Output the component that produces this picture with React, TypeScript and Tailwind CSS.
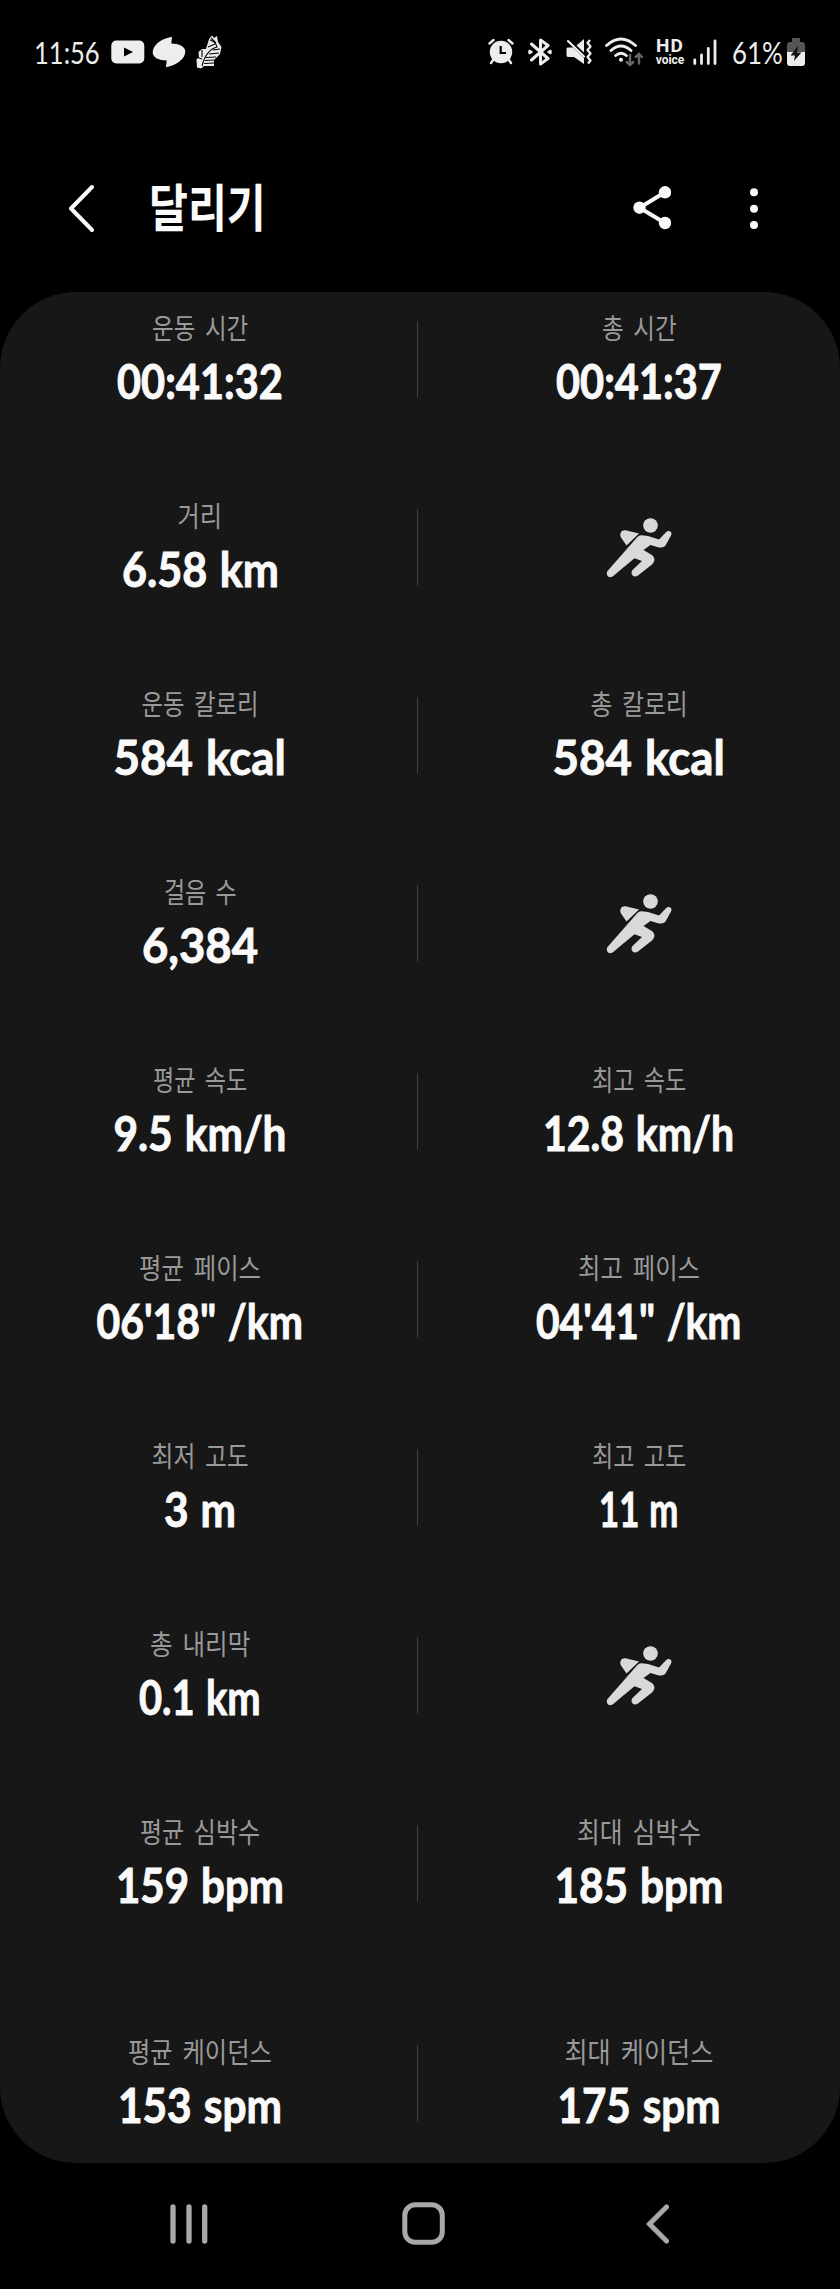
import { useLayoutEffect, useRef, useState } from "react";

type Cell = { label: string; labelWidth: number; value: string; valueWidth: number };
type Row = { left: Cell; right?: Cell };

const rows: Row[] = [
  {
    left: { label: "운동 시간", labelWidth: 94, value: "00:41:32", valueWidth: 162 },
    right: { label: "총 시간", labelWidth: 73, value: "00:41:37", valueWidth: 162 },
  },
  { left: { label: "거리", labelWidth: 43, value: "6.58 km", valueWidth: 153 } },
  {
    left: { label: "운동 칼로리", labelWidth: 115, value: "584 kcal", valueWidth: 168 },
    right: { label: "총 칼로리", labelWidth: 95, value: "584 kcal", valueWidth: 168 },
  },
  { left: { label: "걸음 수", labelWidth: 71, value: "6,384", valueWidth: 112 } },
  {
    left: { label: "평균 속도", labelWidth: 92, value: "9.5 km/h", valueWidth: 169 },
    right: { label: "최고 속도", labelWidth: 92, value: "12.8 km/h", valueWidth: 187 },
  },
  {
    left: { label: "평균 페이스", labelWidth: 120, value: "06'18\" /km", valueWidth: 202 },
    right: { label: "최고 페이스", labelWidth: 120, value: "04'41\" /km", valueWidth: 201 },
  },
  {
    left: { label: "최저 고도", labelWidth: 95, value: "3 m", valueWidth: 68 },
    right: { label: "최고 고도", labelWidth: 92, value: "11 m", valueWidth: 75 },
  },
  { left: { label: "총 내리막", labelWidth: 98, value: "0.1 km", valueWidth: 118 } },
  {
    left: { label: "평균 심박수", labelWidth: 118, value: "159 bpm", valueWidth: 164 },
    right: { label: "최대 심박수", labelWidth: 122, value: "185 bpm", valueWidth: 165 },
  },
  {
    left: { label: "평균 케이던스", labelWidth: 142, value: "153 spm", valueWidth: 160 },
    right: { label: "최대 케이던스", labelWidth: 147, value: "175 spm", valueWidth: 159 },
  },
];

// Condenses a single line of text to the given width.
function FitText({ text, width, className }: { text: string; width: number; className: string }) {
  const ref = useRef<HTMLSpanElement>(null);
  const [scale, setScale] = useState(1);

  useLayoutEffect(() => {
    if (ref.current) setScale(width / ref.current.offsetWidth);
  }, [text, width]);

  return (
    <span
      ref={ref}
      className={`inline-block whitespace-nowrap ${className}`}
      style={{ transform: `scaleX(${scale})` }}
    >
      {text}
    </span>
  );
}

function Runner() {
  return (
    <svg viewBox="0 0 66 60" className="mt-[9px] h-[60px] w-[66px]" fill="#d9d9d9">
      <circle cx="44.5" cy="7.5" r="7.3" />
      <path d="M33 15.5 L19.5 12.3 C15.5 11.8 13 15.5 15 19.5 L20.5 27.5 Z" />
      <path d="M36 17.3 C33.5 17 32 18.3 30.5 20 L1.5 53 C-1 57 3.5 61.5 7.5 57.8 L28.5 40.2 L36 43 L26.5 52 C23.5 56 28 60.5 32 57.5 L46 46.5 C49.5 43 49 39 45.5 36.7 L37.5 32 L44.5 27 L52 29.3 C55 30 57.5 29.5 59.5 27.5 L65 17.5 C67 14 62.5 11.5 60 14.3 L53 21.5 L42 18 Z" />
    </svg>
  );
}

function Metric({ cell }: { cell?: Cell }) {
  if (!cell) {
    return (
      <div className="flex w-[168px] justify-center">
        <Runner />
      </div>
    );
  }
  return (
    <div className="flex w-[220px] flex-col items-center">
      <FitText
        text={cell.label}
        width={cell.labelWidth + 2}
        className="-mt-[9px] h-[34px] font-['Noto_Sans_CJK_KR',sans-serif] text-[28px] leading-[30px] text-[#999999] [word-spacing:5px]"
      />
      <FitText
        text={cell.value}
        width={cell.valueWidth + 4}
        className="mt-[7px] h-14 font-['Lato',sans-serif] text-[47px] leading-[56px] font-bold text-[#fafafa] [-webkit-text-stroke:0.9px_#fafafa] [word-spacing:2px]"
      />
    </div>
  );
}

function StatusBar() {
  return (
    <header className="flex h-[104px] items-center pr-[35px] pl-[34px] text-[#ededed]">
      <div className="flex w-[66px] justify-center">
        <FitText text="11:56" width={66} className="font-['Lato',sans-serif] text-[31px] leading-8" />
      </div>
      <svg viewBox="0 0 34 24" className="ml-[11px] h-6 w-[34px]">
        <rect x="0.3" y="0.5" width="33" height="23" rx="5" fill="currentColor" />
        <path d="M13 7.5 L22 12 L13 16.5Z" fill="#000" />
      </svg>
      <svg viewBox="0 0 34 32" className="ml-[7px] h-8 w-[34px]" fill="currentColor">
        <path d="M20 0.8 L19.3 7.5 C27 7.5 33.3 10.5 33.3 15.5 C33.3 22.5 25 29.5 14 31.2 L14.7 24.5 C7 24.5 0.7 21.5 0.7 16.5 C0.7 9.5 9 2.5 20 0.8Z" />
      </svg>
      <svg viewBox="0 0 26 34" className="ml-2.5 h-[34px] w-[26px]">
        <path d="M13 4 L16 0.5 L18 3 L21 1 L22 7 L25.5 12 L24 19 L18 25 L18 31 L8 31 L5 33.5 L1 32.5 L0.5 24 L3 23 L2.5 17 L6 14 L10 14Z" fill="currentColor" />
        <path d="M14 5 Q20 7 21 12 Q10 15 6 31 M15 3 L20 8 M12 12 L19 9 M3 23 L6 24 M24 14 L17 15 M23 18 L13 19 M20 22 L10 22.5 M18 25 L9 25.5 M18 28 L8 28.5 M6 15 L6 22" stroke="#000" strokeWidth="1.1" fill="none" />
      </svg>

      <div className="ml-auto flex items-center">
        <svg viewBox="0 0 26 28" className="h-7 w-[26px]" fill="none" stroke="currentColor" strokeLinecap="round">
          <circle cx="13" cy="14" r="11.2" fill="currentColor" stroke="none" />
          <path d="M1.5 5.5 L5.5 2 M24.5 5.5 L20.5 2 M5 22 L3 25 M21 22 L23 25" strokeWidth="2.4" />
          <path d="M12.7 8 V15 H18" stroke="#000" strokeWidth="2.2" strokeLinecap="butt" />
        </svg>
        <svg viewBox="0 0 24 28" className="ml-3.5 h-7 w-6" fill="none" stroke="currentColor" strokeWidth="3" strokeLinecap="round" strokeLinejoin="round">
          <path d="M3.5 6 L20 20.5 L12.5 26 V2 L20 7.5 L3.5 22" />
          <path d="M1.3 12.7 V15.3 L3.7 14Z M22.7 12.7 V15.3 L20.3 14Z" strokeWidth="2" />
        </svg>
        <svg viewBox="0 0 26 28" className="ml-3.5 h-7 w-[26px]" fill="currentColor">
          <path d="M0.5 10.5 Q0.5 9.5 2 9.5 H7 L18 20 V26 L8 19 H2 Q0.5 19 0.5 17Z M10.5 7.5 L18 1 V14.5Z" />
          <path d="M2 3 L18 18.5" stroke="currentColor" strokeWidth="2.2" strokeLinecap="round" />
          <path d="M24 2 L21.5 5 L24.5 8.5 L21.5 12 L24.5 15.5 L21.5 19 L24.5 22.5 L22 25.5" fill="none" stroke="currentColor" strokeWidth="2.3" strokeLinejoin="round" />
        </svg>
        <svg viewBox="0 0 38 30" className="ml-[13px] h-[30px] w-[38px]" fill="none" stroke="currentColor" strokeWidth="2.9" strokeLinecap="round">
          <path d="M1.5 8.5 Q16 -4.5 30.5 8.5 M6 13.5 Q16 4.5 26 13.5 M10.7 18.5 Q16 14 21.3 18.5" />
          <circle cx="16" cy="22.8" r="2" fill="currentColor" stroke="none" />
          <path d="M25 18 V28 M21.8 25 L25 28 L28.2 25 M34 26.5 V17 M30.8 20 L34 17 L37 20" stroke="#666" strokeWidth="2.4" />
        </svg>
        <div className="ml-3 flex w-[30px] flex-col items-center font-['Roboto',sans-serif]">
          <span className="h-4 text-[19px] leading-4 font-bold tracking-[1px]">HD</span>
          <span className="h-3 text-[12px] leading-3 font-bold">voice</span>
        </div>
        <svg viewBox="0 0 24 28" className="ml-2 h-7 w-6" stroke="currentColor" strokeWidth="2.8" strokeLinecap="round">
          <path d="M1.8 22 V25.5 M8.5 17 V25.5 M15.3 10.5 V25.5 M22 3 V25.5" />
        </svg>
        <div className="ml-[15px] flex w-[50px] justify-center">
          <FitText text="61%" width={51} className="font-['Lato',sans-serif] text-[31px] leading-8" />
        </div>
        <svg viewBox="0 0 18 28" className="ml-[5px] h-7 w-[18px]">
          <path d="M5 0 H13 V4 H15 Q18 4 18 7 V14 H0 V7 Q0 4 3 4 H5Z" fill="#555" />
          <path d="M0 14 H18 V25 Q18 28 15 28 H3 Q0 28 0 25Z" fill="currentColor" />
          <path d="M11 8 L3.5 17.5 H8 L7 23 L14.5 14.5 H10Z" fill="#111" />
        </svg>
      </div>
    </header>
  );
}

function TitleBar() {
  return (
    <div className="flex h-[188px] items-start text-[#fafafa]">
      <svg viewBox="0 0 26 50" className="mt-20 ml-[68px] h-[50px] w-[26px]" fill="none" stroke="currentColor" strokeWidth="4" strokeLinecap="round" strokeLinejoin="round">
        <path d="M24 3 L3 24.5 L24 46" />
      </svg>
      <h1 className="mt-[71px] ml-[52px] flex w-[122px] justify-center">
        <FitText
          text="달리기"
          width={117}
          className="font-['Noto_Sans_CJK_KR',sans-serif] text-[51px] leading-[60px] font-bold"
        />
      </h1>
      <svg viewBox="0 0 38 44" className="mt-[82px] ml-[365px] h-11 w-[38px]" fill="currentColor">
        <path d="M32 6.3 L6.5 21.7 L32 37" fill="none" stroke="currentColor" strokeWidth="4" />
        <circle cx="32" cy="6.3" r="6.2" />
        <circle cx="6.5" cy="21.7" r="6.2" />
        <circle cx="32" cy="37" r="6.2" />
      </svg>
      <svg viewBox="0 0 8 42" className="mt-[84px] ml-[79px] h-[42px] w-2" fill="currentColor">
        <circle cx="4" cy="4.3" r="4" />
        <circle cx="4" cy="20.7" r="4" />
        <circle cx="4" cy="37" r="4" />
      </svg>
    </div>
  );
}

function NavBar() {
  return (
    <nav className="flex h-[122px] items-center pl-[170px] text-[#a8a8a8]">
      <svg viewBox="0 0 38 42" className="h-[42px] w-[38px]" stroke="currentColor" strokeWidth="5.3" strokeLinecap="round">
        <path d="M3 4 V38 M19 4 V38 M34.7 4 V38" />
      </svg>
      <svg viewBox="0 0 44 44" className="ml-[194px] h-11 w-11" fill="none" stroke="currentColor" strokeWidth="5">
        <rect x="2.8" y="2.8" width="37.5" height="37.5" rx="10.5" />
      </svg>
      <svg viewBox="0 0 24 42" className="ml-[199px] h-[42px] w-6" fill="none" stroke="currentColor" strokeWidth="5" strokeLinecap="round">
        <path d="M21.5 4 L4.5 21 L21.5 38" />
      </svg>
    </nav>
  );
}

export default function App() {
  return (
    <div className="h-[2289px] w-[840px] overflow-hidden bg-black">
      <StatusBar />
      <TitleBar />
      <main className="h-[1871px] rounded-[76px] bg-[#171717] pt-[29px]">
        {rows.map((row) => (
          <section key={row.left.label} className="flex h-[188px] items-start last:mt-8">
            <div className="flex w-[417px] justify-center pr-[17px]">
              <Metric cell={row.left} />
            </div>
            <div className="h-[76px] w-px bg-[#404040]" />
            <div className="flex flex-1 justify-center pl-[20px]">
              <Metric cell={row.right} />
            </div>
          </section>
        ))}
      </main>
      <NavBar />
    </div>
  );
}
